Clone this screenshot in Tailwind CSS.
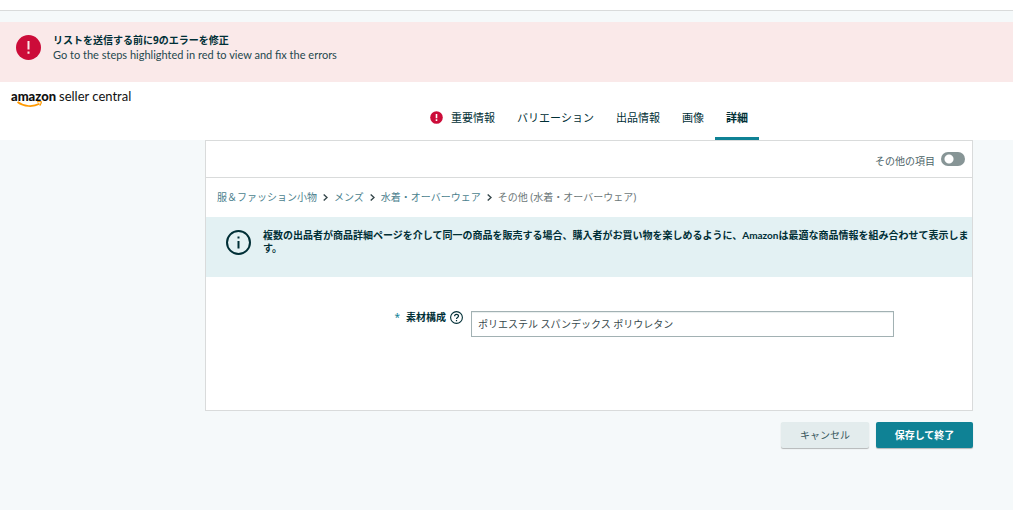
<!DOCTYPE html>
<html lang="ja">
<head>
<meta charset="utf-8">
<title>amazon seller central</title>
<script src="https://cdn.jsdelivr.net/npm/@tailwindcss/browser@4"></script>
</head>
<body class="min-h-screen bg-[#f5f9fa] text-[10px] leading-[13px] text-[#002f36] font-['Noto_Sans','Noto_Sans_CJK_JP',sans-serif]">
  <div class="h-[11px] border-b border-[#d9dbdb] bg-white"></div>

  <section role="alert" class="mt-[11px] flex h-[60px] gap-3 bg-[#fae9e9] pt-3 pl-4">
    <svg class="mt-px size-[25px]" viewBox="0 0 25 25" aria-hidden="true"><circle cx="12.5" cy="12.5" r="12.5" fill="#cc0c39"/><path d="M11.5 6h2v8.5h-2zM11.5 16.5h2v2.300h-2z" fill="#fae9e9"/></svg>
    <div>
      <h2 class="font-bold">リストを送信する前に9のエラーを修正</h2>
      <p class="font-['Lato',sans-serif] text-[11px] leading-[15px] text-[#24484e]">Go to the steps highlighted in red to view and fix the errors</p>
    </div>
  </section>

  <header class="bg-white">
    <a href="#" class="flex h-6 w-fit flex-col pt-[6px] pl-[11px] font-['Lato',sans-serif] text-[13px] leading-4 text-[#111]">
      <span class="flex gap-[3px]"><span class="font-black">amazon</span><span>seller central</span></span>
      <svg class="-mt-[3px] ml-[6px] h-[6px] w-[26px] shrink-0" viewBox="0 0 26 6" fill="none" stroke="#f90" aria-hidden="true"><path d="M.5 1C7 5.800 16 6.200 22.500 2.800" stroke-width="1.700"/><path d="M20 .9c2-.6 3.700-.6 4.100-.2.400.5-.2 2.300-1.300 3.900" stroke-width="1.300"/></svg>
    </a>
    <nav class="flex justify-center pr-10 pl-[205px] text-[11px] leading-4">
      <a href="#" class="flex h-[34px] items-start gap-2 px-[11px] pt-1"><svg class="mt-[1px] size-[13px]" viewBox="0 0 13 13" aria-hidden="true"><circle cx="6.500" cy="6.500" r="6.300" fill="#cc0c39"/><path d="M5.700 3h1.600v4.300H5.700zM5.700 8.300h1.600v1.600H5.700z" fill="#fff"/></svg>重要情報</a>
      <a href="#" class="px-[11px] pt-1">バリエーション</a>
      <a href="#" class="px-[11px] pt-1">出品情報</a>
      <a href="#" class="px-[11px] pt-1">画像</a>
      <a href="#" aria-current="page" class="border-b-3 border-[#0f8295] px-[11px] pt-1 font-bold">詳細</a>
    </nav>
  </header>

  <main class="pr-10 pl-[205px]">
    <div class="border border-[#d9dbdb] bg-white">
      <label class="flex h-[37px] items-center justify-end gap-[6px] border-b border-[#d9dbdb] pr-[7px] text-[#4d6468]">
        <span class="pt-1">その他の項目</span>
        <input type="checkbox" role="switch" class="h-[14px] w-6 appearance-none rounded-full bg-[#879596] bg-[radial-gradient(circle_at_8px_7px,#fff_4px,transparent_5px)]">
      </label>
      <nav class="flex h-[39px] items-center gap-[6px] pl-[11px] text-[#4b7f8e]">
        <a href="#">服＆ファッション小物</a>
        <svg class="h-[7px] w-[5px]" viewBox="0 0 5 7" fill="none" stroke="#36474b" stroke-width="1.400"><path d="M.7.5 4 3.500.7 6.500"/></svg>
        <a href="#">メンズ</a>
        <svg class="h-[7px] w-[5px]" viewBox="0 0 5 7" fill="none" stroke="#36474b" stroke-width="1.400"><path d="M.7.5 4 3.500.7 6.500"/></svg>
        <a href="#">水着・オーバーウェア</a>
        <svg class="h-[7px] w-[5px]" viewBox="0 0 5 7" fill="none" stroke="#36474b" stroke-width="1.400"><path d="M.7.5 4 3.500.7 6.500"/></svg>
        <span class="text-[#6c7778]">その他 (水着・オーバーウェア)</span>
      </nav>
      <div class="flex min-h-[60px] gap-3 bg-[#e3f1f3] pt-3 pl-5">
        <svg class="mt-px size-[25px] shrink-0" viewBox="0 0 25 25" aria-hidden="true"><circle cx="12.500" cy="12.500" r="11.500" fill="none" stroke="#002f36" stroke-width="2"/><path d="M11.500 6.500h2v2h-2zM11.500 11h2v7.500h-2z" fill="#002f36"/></svg>
        <p class="font-['Lato','Noto_Sans_CJK_JP',sans-serif] font-bold">複数の出品者が商品詳細ページを介して同一の商品を販売する場合、購入者がお買い物を楽しめるように、Amazonは最適な商品情報を組み合わせて表示します。</p>
      </div>
      <div class="flex items-start gap-2 pt-[34px] pr-[78px] pb-[73px]">
        <div class="flex w-[257px] items-center justify-end gap-1">
          <label for="material" class="flex gap-[6px] font-bold"><span class="font-normal text-[#0f8295]">*</span>素材構成</label>
          <button type="button" aria-label="ヘルプ"><svg class="size-[13px]" viewBox="0 0 13 13" fill="none" stroke="#002f36"><circle cx="6.500" cy="6.500" r="5.900" stroke-width="1.100"/><path d="M4.600 5.200c0-2.500 3.900-2.500 3.900-.1 0 1.400-2 1.300-2 2.800M6.500 8.900v1.300" stroke-width="1.200"/></svg></button>
        </div>
        <input id="material" type="text" value="ポリエステル スパンデックス ポリウレタン" class="h-[26px] min-w-0 flex-1 border border-[#a2b1b3] bg-white px-[6px] pb-[2px] font-['Lato','Noto_Sans_CJK_JP',sans-serif] text-[#36474b] shadow-[inset_0_1px_1px_#e8eeee]">
      </div>
    </div>
    <div class="flex justify-end gap-[7px] pt-[11px]">
      <button type="button" class="h-[26px] w-[88px] rounded-[2px] bg-[#e3eced] text-[#36565b] shadow-[0_1px_1px_#0004]">キャンセル</button>
      <button type="button" class="h-[26px] w-[97px] rounded-[2px] bg-[#0f8295] font-bold text-white shadow-[0_1px_1px_#0004]">保存して終了</button>
    </div>
  </main>
</body>
</html>
